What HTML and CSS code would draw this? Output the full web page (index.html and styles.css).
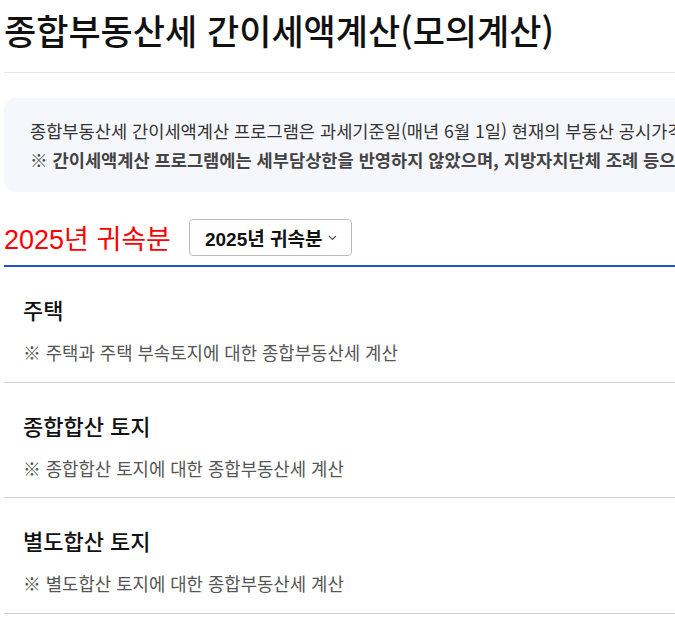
FILE: index.html
```html
<!DOCTYPE html>
<html lang="ko">
<head>
  <meta charset="UTF-8">
  <meta name="viewport" content="width=device-width, initial-scale=1.0">
  <title>종합부동산세 간이세액계산(모의계산)</title>
  <link rel="stylesheet" href="styles.css">
</head>
<body>
  <div class="page">
    <h1 class="page-title">종합부동산세 간이세액계산(모의계산)</h1>

    <div class="notice">
      <p>종합부동산세 간이세액계산 프로그램은 과세기준일(매년 6월 1일) 현재의 부동산 공시가격을 기준으로 세액을 계산합니다.</p>
      <p class="notice-strong">※ 간이세액계산 프로그램에는 세부담상한을 반영하지 않았으며, 지방자치단체 조례 등으로 실제 세액과 다를 수 있습니다.</p>
    </div>

    <div class="year-row">
      <h2 class="year-title">2025년 귀속분</h2>
      <div class="year-select">
        <span>2025년 귀속분</span>
        <svg class="chevron" width="9" height="6" viewBox="0 0 9 6"><path d="M1 1l3.5 3.5L8 1" fill="none" stroke="#555" stroke-width="1.2"/></svg>
      </div>
    </div>

    <ul class="tax-list">
      <li class="tax-item">
        <h3>주택</h3>
        <p>※ 주택과 주택 부속토지에 대한 종합부동산세 계산</p>
      </li>
      <li class="tax-item">
        <h3>종합합산 토지</h3>
        <p>※ 종합합산 토지에 대한 종합부동산세 계산</p>
      </li>
      <li class="tax-item">
        <h3>별도합산 토지</h3>
        <p>※ 별도합산 토지에 대한 종합부동산세 계산</p>
      </li>
    </ul>
  </div>
</body>
</html>
```

FILE: styles.css
```css
* {
  box-sizing: border-box;
  margin: 0;
  padding: 0;
}
html, body {
  overflow: hidden;
}
body {
  font-family: "Noto Sans CJK KR", sans-serif;
  background: #fff;
  color: #111;
  padding: 0 4px;
}
.page {
  width: 1200px;
}
/* Title */
.page-title {
  font-size: 35px;
  font-weight: 500;
  line-height: 42px;
  padding: 9px 0 21px;
  border-bottom: 1px solid #e6e6e6;
}
/* Notice box */
.notice {
  margin-top: 25px;
  padding: 18px 26px;
  background: #f6f7fc;
  border-radius: 12px;
  font-size: 17.6px;
  line-height: 29px;
  color: #333;
  white-space: nowrap;
}
.notice-strong {
  font-weight: 700;
  color: #444;
}
/* Year selector */
.year-row {
  display: flex;
  align-items: center;
  gap: 18px;
  margin-top: 26px;
  padding-bottom: 8px;
  border-bottom: 2px solid #1f55c2;
}
.year-title {
  font-family: "Liberation Sans", "Noto Sans CJK KR", sans-serif;
  font-size: 27px;
  font-weight: 400;
  color: #ff0000;
}
.year-select {
  display: flex;
  align-items: center;
  gap: 6px;
  height: 37px;
  padding: 0 14px 0 15px;
  border: 1px solid #bbb;
  border-radius: 4px;
  font-family: "Liberation Sans", "Noto Sans CJK KR", sans-serif;
  font-size: 19px;
  font-weight: 700;
  color: #111;
}
/* Tax type list */
.tax-list {
  list-style: none;
}
.tax-item {
  padding: 27px 19px 17.5px;
  border-bottom: 1px solid #cfcfcf;
}
.tax-item h3 {
  font-size: 22px;
  font-weight: 500;
  line-height: 30px;
}
.tax-item p {
  margin-top: 16px;
  font-size: 17.8px;
  line-height: 24px;
  color: #555;
}
```
